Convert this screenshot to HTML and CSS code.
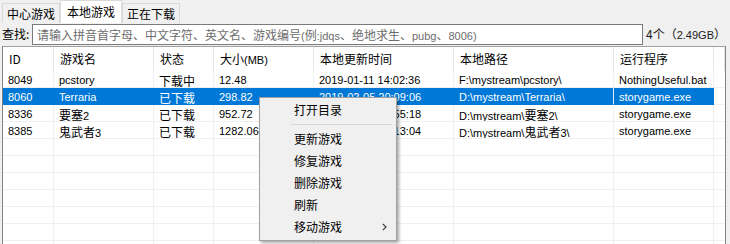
FILE: index.html
```html
<!DOCTYPE html>
<html lang="zh-CN">
<head>
<meta charset="utf-8">
<title>本地游戏</title>
<link rel="stylesheet" href="styles.css">
</head>
<body>
<div class="app">
  <div class="tabs">
    <div class="tab">中心游戏</div>
    <div class="tab active">本地游戏</div>
    <div class="tab">正在下载</div>
  </div>
  <div class="search">
    <span class="label">查找:</span>
    <div class="input">请输入拼音首字母、中文字符、英文名、游戏编号<span class="en">(</span>例<span class="en">:jdqs</span>、绝地求生、<span class="en">pubg</span>、<span class="en">8006)</span></div>
    <span class="count">4个（<span class="en">2.49GB</span>）</span>
  </div>
  <div class="list">
    <div class="grid head">
      <div class="c">ID</div><div class="c">游戏名</div><div class="c">状态</div><div class="c">大小<span class="en">(MB)</span></div><div class="c">本地更新时间</div><div class="c">本地路径</div><div class="c">运行程序</div><div class="c f"></div>
    </div>
    <div class="grid row">
      <div class="c">8049</div><div class="c">pcstory</div><div class="c zh">下载中</div><div class="c">12.48</div><div class="c">2019-01-11 14:02:36</div><div class="c">F:\mystream\pcstory\</div><div class="c">NothingUseful.bat</div><div class="c f"></div>
    </div>
    <div class="grid row sel">
      <div class="c">8060</div><div class="c">Terraria</div><div class="c zh">已下载</div><div class="c">298.82</div><div class="c">2019-02-05 20:09:06</div><div class="c">D:\mystream\Terraria\</div><div class="c">storygame.exe</div><div class="c f"></div>
    </div>
    <div class="grid row">
      <div class="c">8336</div><div class="c"><span class="zh">要塞</span>2</div><div class="c zh">已下载</div><div class="c">952.72</div><div class="c">2019-01-15 15:55:18</div><div class="c">D:\mystream\<span class="zh">要塞</span>2\</div><div class="c">storygame.exe</div><div class="c f"></div>
    </div>
    <div class="grid row">
      <div class="c">8385</div><div class="c"><span class="zh">鬼武者</span>3</div><div class="c zh">已下载</div><div class="c">1282.06</div><div class="c">2019-01-16 10:13:04</div><div class="c">D:\mystream\<span class="zh">鬼武者</span>3\</div><div class="c">storygame.exe</div><div class="c f"></div>
    </div>
    <div class="grid row"><div class="c"></div><div class="c"></div><div class="c"></div><div class="c"></div><div class="c"></div><div class="c"></div><div class="c"></div><div class="c f"></div></div>
    <div class="grid row"><div class="c"></div><div class="c"></div><div class="c"></div><div class="c"></div><div class="c"></div><div class="c"></div><div class="c"></div><div class="c f"></div></div>
    <div class="grid row"><div class="c"></div><div class="c"></div><div class="c"></div><div class="c"></div><div class="c"></div><div class="c"></div><div class="c"></div><div class="c f"></div></div>
    <div class="grid row"><div class="c"></div><div class="c"></div><div class="c"></div><div class="c"></div><div class="c"></div><div class="c"></div><div class="c"></div><div class="c f"></div></div>
    <div class="grid row"><div class="c"></div><div class="c"></div><div class="c"></div><div class="c"></div><div class="c"></div><div class="c"></div><div class="c"></div><div class="c f"></div></div>
    <div class="grid row"><div class="c"></div><div class="c"></div><div class="c"></div><div class="c"></div><div class="c"></div><div class="c"></div><div class="c"></div><div class="c f"></div></div>
    <div class="grid row"><div class="c"></div><div class="c"></div><div class="c"></div><div class="c"></div><div class="c"></div><div class="c"></div><div class="c"></div><div class="c f"></div></div>
  </div>
  <div class="menu">
    <div class="item">打开目录</div>
    <div class="sep"></div>
    <div class="item">更新游戏</div>
    <div class="item">修复游戏</div>
    <div class="item">删除游戏</div>
    <div class="item">刷新</div>
    <div class="item">移动游戏<svg class="arrow" width="5" height="8" viewBox="0 0 5 8"><path d="M0.8 0.8 L4 4 L0.8 7.2" fill="none" stroke="#333" stroke-width="1.1"/></svg></div>
  </div>
</div>
</body>
</html>
```
FILE: styles.css
```css
html, body {
  margin: 0;
  padding: 0;
}
body {
  width: 730px;
  height: 244px;
  overflow: hidden;
  background: #f0f0f0;
  font-family: "Noto Sans CJK SC", "Noto Sans", sans-serif;
  font-size: 12px;
  color: #000;
}
.app {
  position: relative;
  width: 730px;
  height: 244px;
  overflow: hidden;
}
.en {
  font-family: "Liberation Sans", "Noto Sans CJK SC", sans-serif;
  font-size: 11px;
}
.zh {
  font-family: "Noto Sans CJK SC", sans-serif;
  font-size: 12px;
}
.tabs {
  display: flex;
  align-items: flex-end;
  height: 23px;
  padding-left: 2px;
}
.tab {
  box-sizing: border-box;
  height: 20px;
  line-height: 19px;
  padding: 0 4px;
  border: 1px solid #d9d9d9;
  border-bottom: none;
  background: #f0f0f0;
  white-space: nowrap;
}
.tab.active {
  height: 23px;
  line-height: 21px;
  padding: 0 6px;
  background: #ffffff;
}
.search {
  display: flex;
  align-items: center;
  height: 22px;
}
.label {
  width: 30px;
  padding-left: 2px;
  line-height: 20px;
}
.input {
  box-sizing: border-box;
  width: 611px;
  height: 21px;
  border: 1px solid #7a7a7a;
  background: #fff;
  padding-left: 4px;
  line-height: 19px;
  color: #6d6d6d;
  white-space: nowrap;
  overflow: hidden;
}
.count {
  margin-left: 3px;
  line-height: 20px;
  color: #1a1a1a;
  white-space: nowrap;
}
.list {
  box-sizing: border-box;
  margin: 1px 0 0 2px;
  width: 724px;
  height: 200px;
  border: 1px solid #828282;
  border-top-color: #a0a0a0;
  background: #fff;
  overflow: hidden;
}
.grid {
  display: grid;
  grid-template-columns: 51px 100px 60px 100px 140px 160px 100px 1fr;
}
.c {
  box-sizing: border-box;
  white-space: nowrap;
  overflow: hidden;
}
.head .c {
  height: 24px;
  line-height: 22px;
  padding: 1px 0 0 6px;
  border-right: 1px solid #e5e5e5;
}
.row .c {
  height: 17px;
  line-height: 15px;
  padding: 2px 0 0 5px;
  border-right: 1px solid #f0f0f0;
  border-bottom: 1px solid #f0f0f0;
  font-family: "Liberation Sans", "Noto Sans CJK SC", sans-serif;
  font-size: 11px;
}
.row .c.zh {
  font-family: "Noto Sans CJK SC", sans-serif;
  font-size: 12px;
}
.row .c.f {
  border-right: none;
}
.row.sel .c {
  background: #0078d7;
  color: #fff;
  border-right-color: #0078d7;
  border-bottom-color: #0078d7;
}
.row.sel .c:nth-child(6) {
  border-right-color: #e8eef5;
}
.row.sel .c.f {
  background: #fff;
  border-bottom-color: #f0f0f0;
}
.menu {
  position: absolute;
  left: 259px;
  top: 97px;
  box-sizing: border-box;
  width: 138px;
  height: 144px;
  padding: 1px;
  background: #f0f0f0;
  border: 1px solid #a0a0a0;
  box-shadow: 2px 2px 3px rgba(0, 0, 0, 0.35);
}
.item {
  display: flex;
  align-items: center;
  height: 22px;
  line-height: 22px;
  padding-left: 33px;
  padding-right: 8px;
}
.arrow {
  margin-left: auto;
}
.sep {
  height: 1px;
  margin: 3px 3px 3px 30px;
  background: #d7d7d7;
}
```
